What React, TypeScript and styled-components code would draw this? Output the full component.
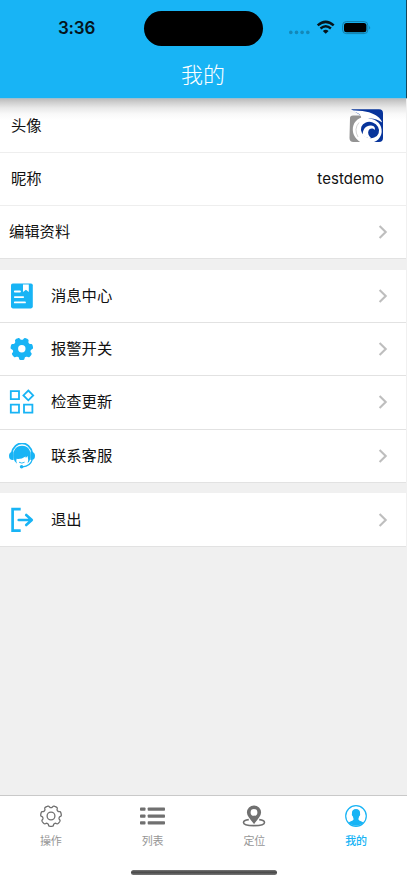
import React from 'react';
import styled, { createGlobalStyle } from 'styled-components';

const BLUE = '#18b4f5';

const GlobalStyle = createGlobalStyle`
  * { box-sizing: border-box; }
  body {
    margin: 0;
    background: #f0f0f0;
    font-family: Inter, "Noto Sans CJK SC", sans-serif;
  }
  svg { display: block; flex: none; }
`;

const Screen = styled.div`
  width: 407px;
  height: 883px;
  display: flex;
  flex-direction: column;
  background: #f0f0f0;
  overflow: hidden;
`;

const Header = styled.header`
  height: 98px;
  flex: none;
  background: ${BLUE};
  border-right: 1px solid #14465c;
`;

const StatusBar = styled.div`
  height: 56px;
  display: grid;
  grid-template-columns: 144px 119px 1fr;
  align-items: center;
`;

const Clock = styled.div`
  padding-left: 58px;
  font-size: 17px;
  font-weight: 600;
  line-height: 20px;
  letter-spacing: -0.2px;
  color: #05141c;
`;

const Island = styled.div`
  height: 35px;
  border-radius: 18px;
  background: #000;
`;

const StatusIcons = styled.div`
  display: flex;
  padding-left: 26px;
`;

const Title = styled.h1`
  margin: 0;
  padding-top: 4px;
  height: 42px;
  font-size: 22px;
  font-weight: 300;
  line-height: 30px;
  text-align: center;
  color: #fff;
`;

const Content = styled.main`
  flex: 1;
  border-top: 1px solid #9fbfcd;
  display: flex;
  flex-direction: column;
  gap: 10.4px;
`;

const Group = styled.section<{ $shaded?: boolean }>`
  border-right: 1px solid #f0f0f0;
  background: ${(p) =>
    p.$shaded
      ? 'linear-gradient(#bdbdbd 0, #d2d2d2 4px, #e9e9e9 9px, #f9f9f9 15px, #fff 21px)'
      : '#fff'};
`;

const Row = styled.div<{ $inset: number; $height?: number; $strong?: boolean }>`
  height: ${(p) => p.$height ?? 53.35}px;
  padding: 0 18px 0 ${(p) => p.$inset}px;
  display: flex;
  align-items: center;
  border-bottom: 1px solid ${(p) => (p.$strong ? '#e2e2e2' : '#eeeeee')};
`;

const Label = styled.span<{ $gap?: number }>`
  flex: 1;
  margin-left: ${(p) => p.$gap ?? 0}px;
  font-size: 15.3px;
  line-height: 22px;
  color: #111;
`;

const Value = styled.span`
  padding-right: 4px;
  font-size: 15px;
  line-height: 20px;
  letter-spacing: 0.05px;
  color: #111;
`;

const LogoBox = styled.div`
  padding-right: 4px;
`;

const TabBar = styled.nav`
  height: 88px;
  flex: none;
  background: #fff;
  border-top: 1px solid #c9c9c9;
  display: flex;
  flex-direction: column;
  align-items: center;
`;

const Tabs = styled.div`
  width: 100%;
  height: 74px;
  display: grid;
  grid-template-columns: repeat(4, 1fr);
`;

const Tab = styled.div<{ $active?: boolean }>`
  padding-top: 8px;
  display: flex;
  flex-direction: column;
  align-items: center;
  gap: 5px;
  color: ${(p) => (p.$active ? BLUE : '#707070')};
`;

const TabLabel = styled.span<{ $active?: boolean }>`
  font-size: 11px;
  font-weight: ${(p) => (p.$active ? 500 : 400)};
  line-height: 16px;
  color: ${(p) => (p.$active ? BLUE : '#969696')};
`;

const HomeIndicator = styled.div`
  width: 146px;
  height: 5px;
  border-radius: 3px;
  background: linear-gradient(#777, #484848 45%, #777);
`;

function gearPath(c: number, mean: number, depth: number) {
  const points: string[] = [];
  for (let i = 0; i < 140; i++) {
    const a = (i / 140) * Math.PI * 2;
    const r = mean + depth * Math.tanh(2.4 * (Math.cos(7 * a) + 0.35));
    points.push(`${(c + r * Math.sin(a)).toFixed(2)} ${(c + r * Math.cos(a)).toFixed(2)}`);
  }
  return `M${points.join('L')}Z`;
}

const Indicators = () => (
  <svg width="84" height="18" viewBox="0 0 84 18">
    <g fill="#1488b8">
      <circle cx="1.8" cy="13.4" r="1.8" />
      <circle cx="7.5" cy="13.4" r="1.8" />
      <circle cx="13.1" cy="13.4" r="1.8" />
      <circle cx="18.8" cy="13.4" r="1.8" />
    </g>
    <g fill="none" stroke="#06141b" strokeWidth="2.5">
      <path d="M28.7 6.4Q36.7-.6 44.7 6.4" />
      <path d="M31.5 9.5Q36.7 5.1 41.9 9.5" />
    </g>
    <path d="M33.8 12Q36.7 9.6 39.6 12L36.7 14.8Z" fill="#06141b" />
    <rect x="53.6" y="2.6" width="25.2" height="12" rx="3.7" fill="none" stroke="#147fab" />
    <rect x="55" y="4" width="22.4" height="9.2" rx="2.5" fill="#000" />
    <path d="M80.2 6.5q1.8 2 0 4Z" fill="#147fab" />
  </svg>
);

const Logo = () => (
  <svg width="35" height="34" viewBox="0 0 35 34">
    <path d="M2 .3H30Q34 .3 34 4.3V29Q34 33 30 33H16V9Z" fill="#07349b" />
    <path d="M1 9Q1 6.5 4 6.5H18V33H4.5Q.5 33 .5 29Z" fill="#939393" />
    <path d="M0 1.6Q12 .8 20 3.2C27 5.5 31.5 8.5 33.2 13.5C28 9.7 23 9 18.5 9.8Q15 9.8 12.5 11.6L12 7.5Q10 3 0 1.6Z" fill="#fff" />
    <path d="M16 7.5C8 9 3.6 14 3.8 21C4 27 8 31.5 13 34H21C28 33 32 29 32.7 23C33.3 16 28 10 20 9.5Z" fill="#fff" />
    <ellipse cx="21" cy="21" rx="9.2" ry="8" fill="#07349b" transform="rotate(20 21 21)" />
    <path d="M13.8 26C13.5 20 17.2 16.3 22 16.6C25.5 17 26.6 19.3 25.6 21C23.8 18.8 20.7 19.2 19.5 21.7C18.5 24.2 19.6 26.7 22 29Q17.5 30.3 13.8 26Z" fill="#fff" />
    <path d="M10 13.5Q4.5 20 9 28" fill="none" stroke="#b5b5b5" strokeWidth=".6" />
  </svg>
);

const Chevron = () => (
  <svg width="10" height="16" viewBox="0 0 10 16">
    <path d="M1.6 2.1L7.7 8L1.6 13.9" fill="none" stroke="#bebebe" strokeWidth="2.1" />
  </svg>
);

const MessageIcon = () => (
  <svg width="26" height="26" viewBox="0 0 26 26">
    <rect x="2" y=".4" width="21.8" height="25" rx="1.8" fill={BLUE} />
    <path d="M14 1.5H19.8V9L16.9 6.8L14 9Z" fill="#fff" />
    <path d="M5.8 8.5H11M5.8 14.1H14.2M5.8 19.4H16" stroke="#fff" strokeWidth="1.8" strokeLinecap="round" />
  </svg>
);

const AlarmIcon = () => (
  <svg width="26" height="26" viewBox="0 0 26 26">
    <path d={`${gearPath(12.8, 10.1, 1.2)} M16.5 12.8a3.7 3.7 0 1 0-7.4 0a3.7 3.7 0 1 0 7.4 0Z`} fill={BLUE} fillRule="evenodd" />
  </svg>
);

const UpdateIcon = () => (
  <svg width="26" height="26" viewBox="0 0 26 26" fill="none" stroke={BLUE} strokeWidth="1.8">
    <path d="M1.8 2.2H10V10.2H1.8ZM1.8 15.6H10V23.6H1.8ZM15 15.6H23.4V23.6H15ZM19.3 1.5L24.2 6.4L19.3 11.3L14.4 6.4Z" />
  </svg>
);

const ServiceIcon = () => (
  <svg width="26" height="26" viewBox="0 0 26 26">
    <path d="M2.7 10.4C5-3 21-3 23.3 10.4" fill="none" stroke={BLUE} strokeWidth="1.9" />
    <path d="M4.6 8.4V17Q0 17.5 0 12.7Q0 8.7 4.6 8.4ZM21.4 8.4V17Q26 17.5 26 12.7Q26 8.7 21.4 8.4Z" fill={BLUE} />
    <path d="M4.5 15C3.8 7 7 2.8 13 2.8C19 2.8 22.2 7 21.5 15Q20.8 18.5 18.6 20.5Q19.7 16.5 18.6 13L16.8 15L16.6 13.4Q12 16.4 7.6 15.8Q6.8 17.8 8 20.8Q5 18.5 4.5 15Z" fill={BLUE} />
    <path d="M23.3 16.5Q21.3 23.3 13.6 23.9" fill="none" stroke={BLUE} strokeWidth="1.2" />
    <circle cx="12.6" cy="23.8" r="1.8" fill={BLUE} />
    <path d="M10 19.2Q12.8 21 15.6 19.2" fill="none" stroke={BLUE} strokeWidth=".9" />
  </svg>
);

const ExitIcon = () => (
  <svg width="26" height="26" viewBox="0 0 26 26" fill="none" stroke={BLUE}>
    <path d="M11.7 2.2H3.6V23.6H11.7" strokeWidth="2.7" />
    <path d="M9.7 13H22.5M17.2 8L22.8 13L17.2 18" strokeWidth="2.6" strokeLinecap="round" strokeLinejoin="round" />
  </svg>
);

const GearTabIcon = () => (
  <svg width="24" height="24" viewBox="0 0 24 24" fill="none" stroke="currentColor" strokeWidth="1.3">
    <path d={gearPath(12, 9.3, 1.05)} />
    <circle cx="12" cy="12" r="3.9" />
  </svg>
);

const ListTabIcon = () => (
  <svg width="25" height="24" viewBox="0 0 25 24" fill="currentColor">
    {[3.5, 10.5, 17.3].map((y) => (
      <React.Fragment key={y}>
        <rect x="0" y={y} width="5.5" height="3.2" rx=".8" />
        <rect x="7.7" y={y} width="17.3" height="3.2" rx=".8" />
      </React.Fragment>
    ))}
  </svg>
);

const PlaceTabIcon = () => (
  <svg width="24" height="24" viewBox="0 0 24 24">
    <path d="M6.8 15.6C3.1 16 1.5 17 1.5 18.4C1.5 20.4 6 21.6 12 21.6S22.5 20.4 22.5 18.4C22.5 17 20.9 16 17.2 15.6" fill="none" stroke="currentColor" strokeWidth="1.6" />
    <path d="M12 20Q4.9 12.1 4.9 8.6A7.1 7.1 0 0 1 19.1 8.6Q19.1 12.1 12 20ZM15.4 8.4a3.4 3.4 0 1 0-6.8 0a3.4 3.4 0 1 0 6.8 0Z" fill="currentColor" fillRule="evenodd" />
  </svg>
);

const ProfileTabIcon = () => (
  <svg width="24" height="24" viewBox="0 0 24 24">
    <circle cx="12" cy="12" r="10.3" fill="none" stroke="currentColor" strokeWidth="1.2" />
    <path d="M12 5C15.1 5 16.4 7.2 16 9.8C16.4 10.3 16 11.8 15.2 12.3C14.8 13.8 14.5 14.2 14.4 15.2C14.8 17 17.8 16.9 19.3 18.6A10 10 0 0 1 4.7 18.6C6.2 16.9 9.2 17 9.6 15.2C9.5 14.2 9.2 13.8 8.8 12.3C8 11.8 7.6 10.3 8 9.8C7.6 7.2 8.9 5 12 5Z" fill="currentColor" />
  </svg>
);

const features = [
  { label: '消息中心', Icon: MessageIcon },
  { label: '报警开关', Icon: AlarmIcon },
  { label: '检查更新', Icon: UpdateIcon },
  { label: '联系客服', Icon: ServiceIcon },
];

const tabs = [
  { label: '操作', Icon: GearTabIcon },
  { label: '列表', Icon: ListTabIcon },
  { label: '定位', Icon: PlaceTabIcon },
  { label: '我的', Icon: ProfileTabIcon, active: true },
];

export default function App() {
  return (
    <Screen>
      <GlobalStyle />
      <Header>
        <StatusBar>
          <Clock>3:36</Clock>
          <Island />
          <StatusIcons><Indicators /></StatusIcons>
        </StatusBar>
        <Title>我的</Title>
      </Header>
      <Content>
        <Group $shaded>
          <Row $inset={11} $height={54}>
            <Label>头像</Label>
            <LogoBox><Logo /></LogoBox>
          </Row>
          <Row $inset={11} $height={53}>
            <Label>昵称</Label>
            <Value>testdemo</Value>
          </Row>
          <Row $inset={9} $height={53.2} $strong>
            <Label>编辑资料</Label>
            <Chevron />
          </Row>
        </Group>
        <Group>
          {features.map(({ label, Icon }) => (
            <Row key={label} $inset={9} $strong>
              <Icon />
              <Label $gap={16}>{label}</Label>
              <Chevron />
            </Row>
          ))}
        </Group>
        <Group>
          <Row $inset={9} $height={53.6} $strong>
            <ExitIcon />
            <Label $gap={16}>退出</Label>
            <Chevron />
          </Row>
        </Group>
      </Content>
      <TabBar>
        <Tabs>
          {tabs.map(({ label, Icon, active }) => (
            <Tab key={label} $active={active}>
              <Icon />
              <TabLabel $active={active}>{label}</TabLabel>
            </Tab>
          ))}
        </Tabs>
        <HomeIndicator />
      </TabBar>
    </Screen>
  );
}
